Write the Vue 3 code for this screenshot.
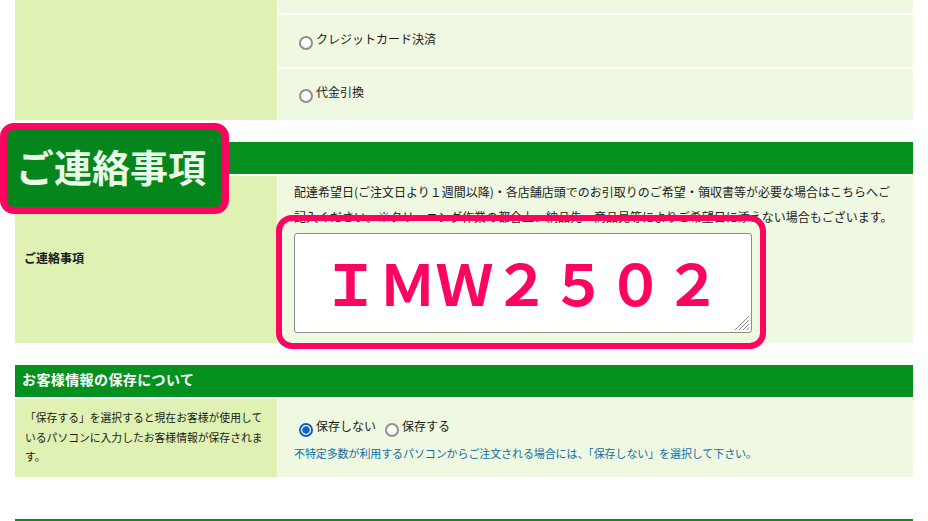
<script setup>
import { ref } from 'vue'

const payment = ref('')
const save = ref('no')
const note = ref('ＩＭＷ２５０２')
</script>

<template>
  <div class="page">
    <!-- お支払い方法の続き -->
    <div class="form-row pay-row">
      <div class="cell-left"></div>
      <div class="pay-list">
        <div class="pay-item pay-first"></div>
        <label class="pay-item">
          <input v-model="payment" type="radio" name="pay" value="card" />
          <span>クレジットカード決済</span>
        </label>
        <label class="pay-item">
          <input v-model="payment" type="radio" name="pay" value="cod" />
          <span>代金引換</span>
        </label>
      </div>
    </div>

    <!-- ご連絡事項 -->
    <section class="section section-note">
      <div class="bar"></div>
      <div class="badge"><span>ご連絡事項</span></div>
      <div class="form-row note-row">
        <div class="cell-left note-label">ご連絡事項</div>
        <div class="cell-right note-body">
          <p class="note-text">
            配達希望日(ご注文日より１週間以降)・各店舗店頭でのお引取りのご希望・領収書等が必要な場合はこちらへご<br />記入ください。※クリーニング作業の都合上、納品先・商品見等によりご希望日に添えない場合もございます。
          </p>
          <div class="area-wrap">
            <textarea v-model="note" class="note-area" spellcheck="false"></textarea>
            <svg class="grip" width="16" height="16" viewBox="0 0 16 16">
              <path d="M1 15 15 1M5 15 15 5M9 15 15 9M12.5 15 15 12.5" stroke="#8a8a8a" stroke-width="1" fill="none" />
            </svg>
            <div class="ring"></div>
          </div>
        </div>
      </div>
    </section>

    <!-- お客様情報の保存 -->
    <section class="section section-save">
      <div class="bar bar-title">お客様情報の保存について</div>
      <div class="form-row save-row">
        <div class="cell-left save-help">「保存する」を選択すると現在お客様が使用しているパソコンに入力したお客様情報が保存されます。</div>
        <div class="cell-right save-body">
          <div class="save-options">
            <label class="opt">
              <input v-model="save" type="radio" name="save" value="no" />
              <span>保存しない</span>
            </label>
            <label class="opt">
              <input v-model="save" type="radio" name="save" value="yes" />
              <span>保存する</span>
            </label>
          </div>
          <p class="save-note">不特定多数が利用するパソコンからご注文される場合には、「保存しない」を選択して下さい。</p>
        </div>
      </div>
    </section>

    <div class="bottom-line"></div>
  </div>
</template>

<style scoped>
.page {
  width: 898px;
  height: 521px;
  margin-left: 15px;
  font-family: "Noto Sans CJK JP", "Noto Sans", sans-serif;
  font-size: 12px;
  color: #1a1a1a;
}
.form-row {
  display: grid;
  grid-template-columns: 262px 635px;
  column-gap: 1px;
}
.cell-left {
  background: #dff2b3;
}
.cell-right {
  background: #eff8e0;
}
.pay-row {
  height: 120px;
}
.pay-list {
  display: flex;
  flex-direction: column;
  gap: 2px;
}
.pay-item {
  display: flex;
  align-items: center;
  height: 52px;
  padding-left: 21px;
  background: #eff8e0;
}
.pay-item:last-child {
  height: 51px;
}
.pay-first {
  height: 13px;
}
.pay-item span,
.opt span {
  margin-top: -6px;
}
input[type="radio"] {
  appearance: none;
  box-sizing: border-box;
  width: 14px;
  height: 14px;
  margin: 3px 3px 0 0;
  border: 2px solid #8f8f8f;
  border-radius: 50%;
  background: #fff;
}
input[type="radio"]:checked {
  border-color: #0f62c0;
  background: radial-gradient(circle, #0f62c0 0 3.4px, #fff 4px);
}
.section {
  position: relative;
  margin-top: 22px;
}
.bar {
  height: 32px;
  background: #05911f;
}
.bar-title {
  padding-left: 7px;
  color: #fff;
  font-size: 14px;
  font-weight: 700;
  line-height: 29px;
  letter-spacing: 0.4px;
}
.badge {
  position: absolute;
  left: -15px;
  top: -19px;
  width: 229px;
  height: 91px;
  box-sizing: border-box;
  display: flex;
  align-items: center;
  padding: 0 0 6px 9px;
  border: 7px solid #fa0560;
  border-radius: 14px;
  background: #05861c;
  color: #eafbe8;
  font-size: 38px;
  font-weight: 700;
  line-height: 1;
  white-space: nowrap;
}
.note-row {
  margin-top: 2px;
  height: 167px;
}
.note-label {
  display: flex;
  align-items: center;
  padding: 0 0 4px 9px;
  font-weight: 700;
}
.note-body {
  padding: 4px 0 0 16px;
}
.note-text {
  margin: 0;
  line-height: 24.5px;
  white-space: nowrap;
}
.area-wrap {
  position: relative;
  width: 458px;
  height: 100px;
  margin-top: 4px;
}
.note-area {
  display: block;
  width: 458px;
  height: 100px;
  box-sizing: border-box;
  padding: 0 0 0 27px;
  border: 1px solid #8c8c8c;
  border-radius: 3px;
  outline: none;
  resize: none;
  background: #fff;
  color: #fa0560;
  font-family: "Noto Sans CJK JP", sans-serif;
  font-size: 57px;
  font-weight: 700;
  line-height: 94px;
  overflow: hidden;
}
.grip {
  position: absolute;
  right: 2px;
  bottom: 2px;
  pointer-events: none;
}
.ring {
  position: absolute;
  left: -18px;
  top: -18px;
  width: 490px;
  height: 134px;
  box-sizing: border-box;
  border: 6px solid #fa0560;
  border-radius: 16px;
  pointer-events: none;
}
.save-row {
  margin-top: 2px;
  height: 78px;
}
.save-help {
  padding: 9px 12px 0 10px;
  font-size: 10.8px;
  line-height: 19.5px;
}
.save-body {
  padding: 21px 0 0 21px;
}
.save-options {
  display: flex;
  gap: 9px;
  height: 16px;
}
.opt {
  display: flex;
  align-items: center;
}
.save-note {
  margin: 9px 0 0 -5px;
  color: #0f6ea8;
  font-size: 11px;
  line-height: 16px;
  letter-spacing: -0.1px;
  white-space: nowrap;
}
.bottom-line {
  height: 2px;
  margin-top: 42px;
  background: #05911f;
}
</style>

<style>
html, body {
  margin: 0;
  background: #fff;
  overflow: hidden;
}
</style>
